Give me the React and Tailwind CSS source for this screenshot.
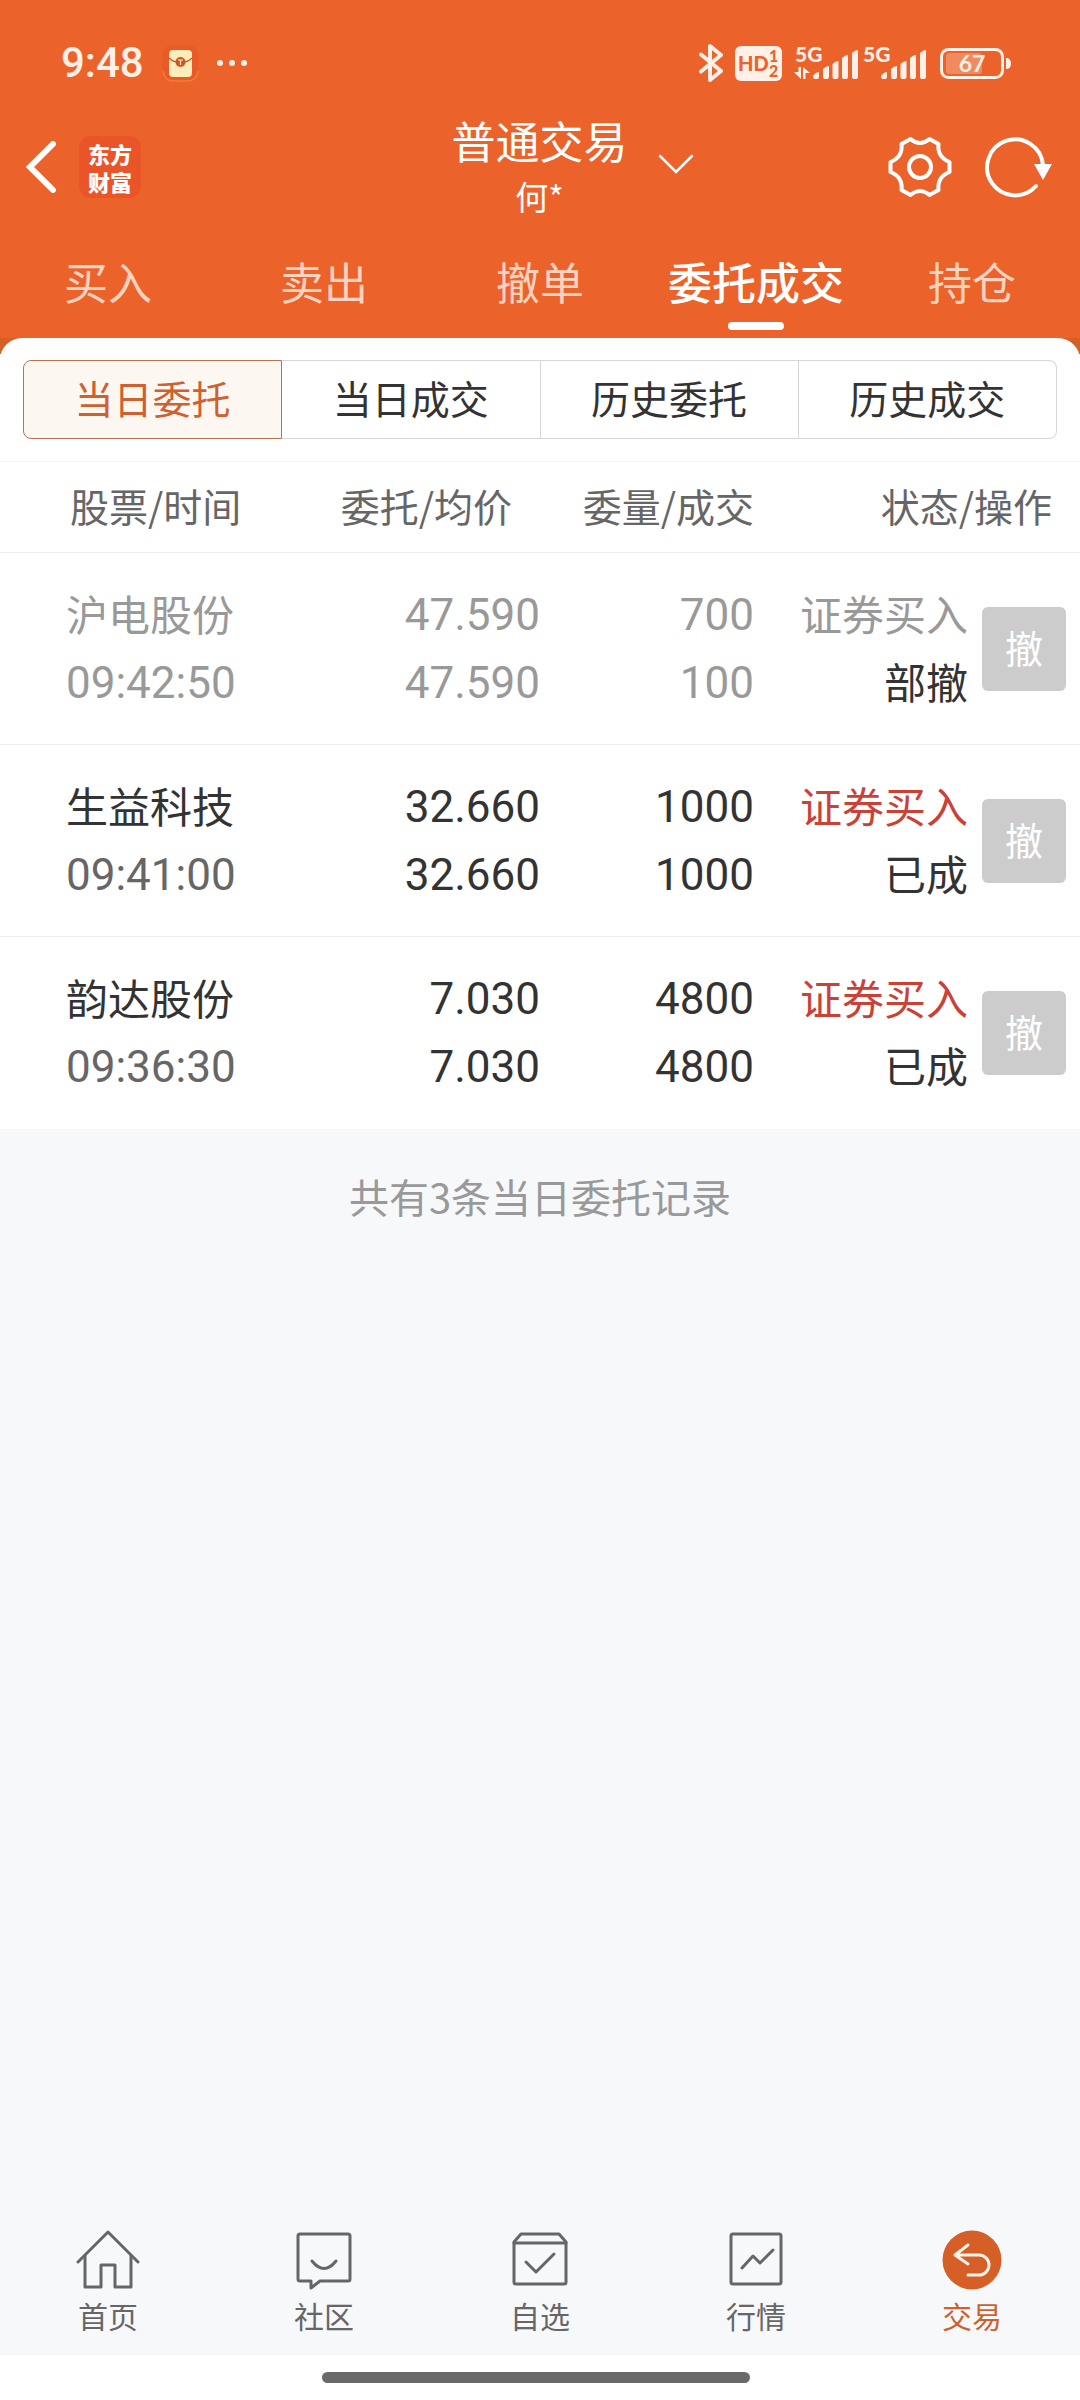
const TABS = ['买入', '卖出', '撤单', '委托成交', '持仓'];

const SEGMENTS = ['当日委托', '当日成交', '历史委托', '历史成交'];

const ORDERS = [
  { name: '沪电股份', time: '09:42:50', price: '47.590', avg: '47.590', amount: '700', filled: '100', side: '证券买入', status: '部撤', cancelled: true },
  { name: '生益科技', time: '09:41:00', price: '32.660', avg: '32.660', amount: '1000', filled: '1000', side: '证券买入', status: '已成' },
  { name: '韵达股份', time: '09:36:30', price: '7.030', avg: '7.030', amount: '4800', filled: '4800', side: '证券买入', status: '已成' },
];

/* ---------- Icons ---------- */

function BluetoothIcon() {
  return (
    <svg className="w-6 h-10" viewBox="0 0 24 40" fill="none" stroke="currentColor" strokeWidth="4" strokeLinejoin="round" strokeLinecap="round">
      <path d="M2 11.500 22 28 11 37V3L22 12 2 28.500" />
    </svg>
  );
}

function EnvelopeIcon() {
  return (
    <svg className="w-[37px] h-[37px]" viewBox="0 0 37 37">
      <rect x="0.500" y="0.500" width="36" height="36" rx="9" fill="#ea5a29" />
      <path d="M1 26c1 7 4 10 10 10h15c6 0 9-3 10-10" fill="none" stroke="#f27f33" strokeWidth="1.500" />
      <rect x="7" y="5" width="23" height="27" rx="4" fill="#fdedba" />
      <path d="M7 13c6 6 17 6 23 0" fill="none" stroke="#c9552a" strokeWidth="1.200" />
      <circle cx="18.500" cy="17" r="5" fill="#cf5527" />
      <path d="M16 15h5M18.500 15v5" stroke="#fdedba" strokeWidth="1.200" />
    </svg>
  );
}

function HdIcon() {
  return (
    <svg className="w-[47px] h-[35px]" viewBox="0 0 47 35" fontFamily="Lato, sans-serif" fontWeight="900" fill="#ec622b">
      <rect width="47" height="35" rx="6" fill="currentColor" />
      <text x="3" y="25" fontSize="20">HD</text>
      <text x="34" y="16" fontSize="16">1</text>
      <text x="34" y="31" fontSize="16">2</text>
    </svg>
  );
}

function SignalIcon({ data }) {
  return (
    <svg className="w-16 h-12" viewBox="0 -6 64 48" fill="currentColor">
      <text x="1" y="17" fontSize="21" fontFamily="Lato, sans-serif" fontWeight="900">5G</text>
      {data && <path d="M4.500 22H7v12L0 27h4.500zM9 34V22l7 6h-4.500v6z" />}
      <path d="M19 31q3-4 6-4v5q0 2-2 2h-2q-2 0-2-3zM29 24q3-3 6-3v11q0 2-2 2h-2q-2 0-2-2zM38.500 19q3-3 6-3v16q0 2-2 2h-2q-2 0-2-2zM48 13q3-3 6-3v22q0 2-2 2h-2q-2 0-2-2zM58 8q3-3 6-3v27q0 2-2 2h-2q-2 0-2-2z" />
    </svg>
  );
}

function BatteryIcon() {
  return (
    <svg className="w-[71px] h-[31px]" viewBox="0 0 71 31">
      <rect x="1.500" y="1.500" width="61" height="28" rx="7" fill="none" stroke="currentColor" strokeWidth="3" />
      <rect x="6" y="5" width="36" height="21" rx="3" fill="#f28a60" />
      <path d="M66 10q5 0 5 5.500T66 21z" fill="currentColor" />
      <text x="32" y="24" fontSize="23" fontFamily="Lato, sans-serif" fontWeight="700" textAnchor="middle" fill="currentColor">67</text>
    </svg>
  );
}

function BackIcon() {
  return (
    <svg className="w-8 h-[52px]" viewBox="0 0 32 52" fill="none" stroke="currentColor" strokeWidth="6" strokeLinecap="round">
      <path d="M28 3 5 26l23 23" />
    </svg>
  );
}

function GearIcon() {
  return (
    <svg className="w-16 h-16" viewBox="0 0 64 64" fill="none" stroke="currentColor" strokeWidth="4" strokeLinejoin="round">
      <path d="M22.500 4Q32 12 41.500 4L50.500 9Q49 22 61.500 27V37Q49 42 50.500 55L41.500 60Q32 52 22.500 60L13.500 55Q15 42 2.500 37V27Q15 22 13.500 9Z" />
      <circle cx="32" cy="32" r="11" />
    </svg>
  );
}

function RefreshIcon() {
  return (
    <svg className="w-[68px] h-16" viewBox="0 0 68 64" fill="none" stroke="currentColor" strokeWidth="4" strokeLinecap="round">
      <path d="M52 51a28 28 0 1 1 7-21" />
      <path d="M50 29h18L59 45z" fill="currentColor" stroke="none" />
    </svg>
  );
}

function HomeIcon() {
  return (
    <>
      <path d="M2 32 32 2l30 30" />
      <path d="M9 26v31h16V35h14v22h16V26" />
    </>
  );
}

function CommunityIcon() {
  return (
    <>
      <path d="M8 4h48q2 0 2 2v43q0 2-2 2H28l-9 7v-7H8q-2 0-2-2V6q0-2 2-2z" />
      <path d="M20 31q12 15 24 0" />
    </>
  );
}

function WatchlistIcon() {
  return (
    <>
      <path d="M13 4h38l7 8v40q0 2-2 2H8q-2 0-2-2V12z" />
      <path d="M6 13h52M18 32l10 10 18-18" />
    </>
  );
}

function MarketIcon() {
  return (
    <>
      <rect x="7" y="4" width="50" height="50" rx="2" />
      <path d="m18 38 11-12 7 7 13-13" />
    </>
  );
}

function TradeIcon() {
  return (
    <>
      <circle cx="32" cy="30" r="29.500" fill="#d65f28" stroke="none" />
      <path d="M28 15 15 25l13 9M16 25h23a10 10 0 0 1 0 20H28" stroke="#fff3ea" />
    </>
  );
}

const NAV = [
  { label: '首页', Icon: HomeIcon },
  { label: '社区', Icon: CommunityIcon },
  { label: '自选', Icon: WatchlistIcon },
  { label: '行情', Icon: MarketIcon },
  { label: '交易', Icon: TradeIcon, active: true },
];

/* ---------- Sections ---------- */

function StatusBar() {
  return (
    <div className="flex items-center h-[108px] pt-[18px] pl-[61px] pr-[69px] text-[#fff0e8]">
      <span className="font-[Roboto] text-[42px] leading-none font-medium">9:48</span>
      <span className="ml-[18px]"><EnvelopeIcon /></span>
      <span className="flex gap-[6px] ml-[18px]">
        <i className="size-[6px] rounded-full bg-current" />
        <i className="size-[6px] rounded-full bg-current" />
        <i className="size-[6px] rounded-full bg-current" />
      </span>
      <div className="flex items-center ml-auto">
        <BluetoothIcon />
        <span className="ml-3"><HdIcon /></span>
        <span className="ml-3"><SignalIcon data /></span>
        <span className="ml-1"><SignalIcon /></span>
        <span className="ml-[14px]"><BatteryIcon /></span>
      </div>
    </div>
  );
}

function TitleBar() {
  return (
    <div className="grid grid-cols-[1fr_auto_1fr] items-center h-[118px] pl-[25px] pr-7">
      <div className="flex items-center gap-[22px]">
        <button aria-label="返回"><BackIcon /></button>
        <div className="flex flex-col justify-center size-[62px] rounded-xl bg-[#ea5429] text-center text-[22px] leading-[28px] font-black">
          <span>东方</span>
          <span>财富</span>
        </div>
      </div>
      <button className="flex items-center self-start gap-[30px] pl-[68px]">
        <span className="flex flex-col items-center">
          <span className="text-[44px] leading-[64px]">普通交易</span>
          <span className="text-[33px] leading-[48px]">何*</span>
        </span>
        <svg className="w-9 h-5" viewBox="0 0 36 20" fill="none" stroke="currentColor" strokeWidth="2.500" strokeLinecap="round">
          <path d="m2 2 16 16L34 2" />
        </svg>
      </button>
      <div className="flex items-center justify-end gap-8">
        <button aria-label="设置"><GearIcon /></button>
        <button aria-label="刷新"><RefreshIcon /></button>
      </div>
    </div>
  );
}

function Tabs() {
  return (
    <nav className="grid grid-cols-5 h-[112px]">
      {TABS.map((tab) => {
        const active = tab === '委托成交';
        return (
          <button
            key={tab}
            className={`flex flex-col items-center justify-end gap-2 pb-2 text-[44px] leading-[66px] ${active ? 'font-medium text-white' : 'text-[#fcd3c0]'}`}
          >
            {tab}
            <span className={`w-14 h-2 rounded-full ${active ? 'bg-white' : ''}`} />
          </button>
        );
      })}
    </nav>
  );
}

function Segments() {
  return (
    <div className="flex mx-[23px]">
      {SEGMENTS.map((label, i) => (
        <button
          key={label}
          className={`flex-1 h-[79px] pb-1 border text-[39px] first:rounded-l-lg last:rounded-r-lg ${
            i === 0 ? 'border-[#b8734e] bg-[#fdf7f2] text-[#cf6030]' : 'border-[#d6d6d6] border-l-0 text-[#333]'
          }`}
        >
          {label}
        </button>
      ))}
    </div>
  );
}

function OrderRow({ order }) {
  const { name, time, price, avg, amount, filled, side, status, cancelled } = order;
  const main = cancelled ? 'text-[#999]' : 'text-[#333]';

  return (
    <tr className={`h-48 border-b border-[#ececec] last:border-b-0 leading-[68px] ${main}`}>
      <td className="pl-[66px]">
        <div className="pb-1 text-[42px] leading-[64px]">{name}</div>
        <div className={`font-[Roboto] text-[44px] ${cancelled ? '' : 'text-[#666]'}`}>{time}</div>
      </td>
      <td className="text-right font-[Roboto] text-[44px]">
        <div>{price}</div>
        <div>{avg}</div>
      </td>
      <td className="pr-[2px] text-right font-[Roboto] text-[44px]">
        <div>{amount}</div>
        <div>{filled}</div>
      </td>
      <td className="pr-1 pb-1 text-right text-[42px]">
        <div className={cancelled ? '' : 'text-[#cc4035]'}>{side}</div>
        <div className="text-[#333]">{status}</div>
      </td>
      <td className="pl-[10px]">
        <button className="block size-[84px] pb-1 rounded-md bg-[#ccc] text-[38px] leading-[76px] text-white">撤</button>
      </td>
    </tr>
  );
}

function OrderTable() {
  return (
    <table className="w-full mt-[22px] table-fixed border-t border-[#f5f5f5]">
      <colgroup>
        <col className="w-[25%]" />
        <col className="w-[25%]" />
        <col className="w-[20%]" />
        <col className="w-[20%]" />
        <col className="w-[10%]" />
      </colgroup>
      <thead>
        <tr className="h-[91px] border-b border-[#ececec] text-[39px] text-[#666]">
          <th className="pb-1 pl-[70px] text-left font-normal">股票/时间</th>
          <th className="pb-1 pr-7 text-right font-normal">委托/均价</th>
          <th className="pb-1 pr-[2px] text-right font-normal">委量/成交</th>
          <th colSpan={2} className="pb-1 pr-7 text-right font-normal">状态/操作</th>
        </tr>
      </thead>
      <tbody>
        {ORDERS.map((order) => (
          <OrderRow key={order.time} order={order} />
        ))}
      </tbody>
    </table>
  );
}

function BottomNav() {
  return (
    <nav className="grid grid-cols-5 mt-auto pb-[18px]">
      {NAV.map(({ label, Icon, active }) => (
        <a key={label} href="#" className={`flex flex-col items-center text-[30px] leading-[44px] ${active ? 'text-[#cf6030]' : 'text-[#666]'}`}>
          <svg className="w-16 h-16" viewBox="0 -1 64 64" fill="none" stroke="currentColor" strokeWidth="3" strokeLinecap="round" strokeLinejoin="round">
            <Icon />
          </svg>
          {label}
        </a>
      ))}
    </nav>
  );
}

export default function App() {
  return (
    <div className="flex flex-col min-h-screen bg-[#f7f8fa] font-['Noto_Sans_CJK_SC',sans-serif]">
      <header className="bg-[#ec622b] text-white">
        <StatusBar />
        <TitleBar />
        <Tabs />
      </header>
      <div className="bg-linear-to-b from-[#d65f28] from-[16px] to-white to-[16px]">
        <main className="pt-[22px] rounded-t-[22px] bg-white">
          <Segments />
          <OrderTable />
        </main>
      </div>
      <p className="mt-9 text-center text-[40px] leading-[62px] text-[#999]">共有3条当日委托记录</p>
      <BottomNav />
      <div className="flex justify-center h-[45px] pt-[17px] pr-2 bg-white">
        <div className="w-[428px] h-[11px] rounded-full bg-[#696969]" />
      </div>
    </div>
  );
}
